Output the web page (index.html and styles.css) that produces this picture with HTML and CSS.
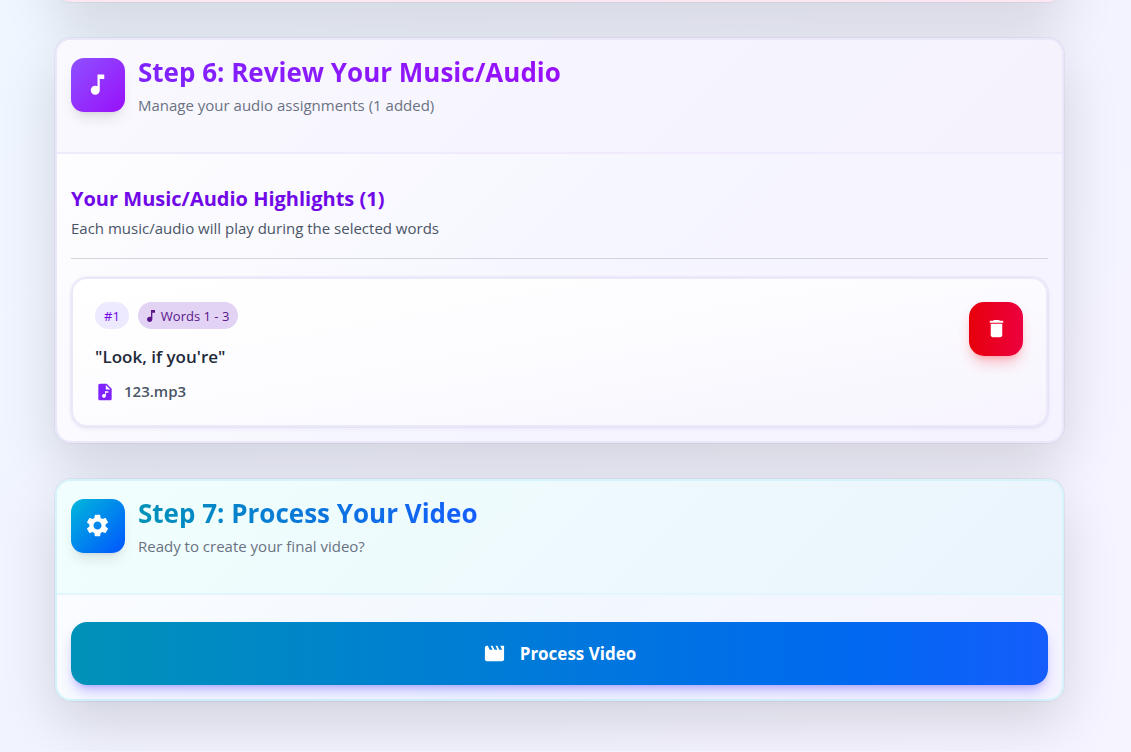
FILE: index.html
```html
<!DOCTYPE html>
<html lang="en">
<head>
<meta charset="utf-8">
<meta name="viewport" content="width=device-width, initial-scale=1">
<title>Review and process</title>
<link rel="stylesheet" href="styles.css">
</head>
<body>
<main class="page">
  <section class="card card-pink" aria-hidden="true"></section>

  <section class="card card-violet">
    <header class="card-header">
      <span class="step-icon">
        <svg class="icon-lg" viewBox="0 0 24 24" aria-hidden="true"><path d="M12 3v10.55c-.59-.34-1.27-.55-2-.55-2.21 0-4 1.790-4 4s1.790 4 4 4 4-1.790 4-4V7h4V3h-6z"/></svg>
      </span>
      <div class="heading">
        <h2 class="title">Step 6: Review Your Music/Audio</h2>
        <p class="subtitle">Manage your audio assignments (1 added)</p>
      </div>
    </header>
    <div class="card-body">
      <div class="list-head">
        <h3 class="list-title">Your Music/Audio Highlights (1)</h3>
        <p class="list-note">Each music/audio will play during the selected words</p>
      </div>
      <article class="item">
        <div class="item-info">
          <div class="tags">
            <span class="tag">#1</span>
            <span class="tag tag-words"><svg class="icon-note" viewBox="0 0 24 24" aria-hidden="true"><path d="M12 3v10.55c-.59-.34-1.27-.55-2-.55-2.21 0-4 1.790-4 4s1.790 4 4 4 4-1.790 4-4V7h4V3h-6z"/></svg>Words 1 - 3</span>
          </div>
          <p class="quote">"Look, if you're"</p>
          <p class="file"><svg class="icon-file" viewBox="0 0 24 24" aria-hidden="true"><path d="M14 2H6c-1.100 0-1.990.9-1.990 2L4 20c0 1.100.89 2 1.990 2H18c1.100 0 2-.9 2-2V8l-6-6zm2 11h-3v3.750c0 1.240-1.010 2.250-2.250 2.250S8.500 17.990 8.500 16.750s1.010-2.250 2.250-2.250c.46 0 .89.140 1.250.38V11h4v2zm-3-4V3.500L18.500 9H13z"/></svg>123.mp3</p>
        </div>
        <button class="delete" type="button" aria-label="Delete">
          <svg class="icon-trash" viewBox="0 0 24 24" aria-hidden="true"><path d="M6 19c0 1.100.9 2 2 2h8c1.100 0 2-.9 2-2V7H6v12zM19 4h-3.500l-1-1h-5l-1 1H5v2h14V4z"/></svg>
        </button>
      </article>
    </div>
  </section>

  <section class="card card-cyan">
    <header class="card-header">
      <span class="step-icon">
        <svg class="icon-lg" viewBox="0 0 24 24" aria-hidden="true"><path d="M19.140 12.940c.04-.3.060-.61.060-.94 0-.32-.02-.64-.07-.94l2.030-1.580c.18-.14.230-.41.120-.61l-1.920-3.320c-.12-.22-.37-.29-.59-.22l-2.390.96c-.5-.38-1.030-.7-1.620-.94l-.36-2.540c-.04-.24-.24-.41-.48-.41h-3.840c-.24 0-.43.170-.47.410l-.36 2.540c-.59.240-1.130.57-1.620.94l-2.390-.96c-.22-.08-.47 0-.59.220L2.740 8.870c-.12.210-.08.470.120.610l2.030 1.580c-.05.3-.09.63-.09.94s.02.640.070.940l-2.030 1.580c-.18.140-.23.410-.12.610l1.920 3.320c.12.220.37.290.59.220l2.390-.96c.5.380 1.030.7 1.620.94l.36 2.540c.05.240.24.410.48.410h3.840c.24 0 .44-.17.470-.41l.36-2.540c.59-.24 1.130-.56 1.620-.94l2.390.96c.22.080.47 0 .59-.22l1.920-3.320c.12-.22.070-.47-.12-.61l-2.010-1.580zM12 15.600c-1.980 0-3.600-1.620-3.600-3.600s1.620-3.600 3.600-3.600 3.600 1.620 3.600 3.600-1.620 3.600-3.600 3.600z"/></svg>
      </span>
      <div class="heading">
        <h2 class="title">Step 7: Process Your Video</h2>
        <p class="subtitle">Ready to create your final video?</p>
      </div>
    </header>
    <div class="card-body">
      <button class="process" type="button">
        <svg class="icon-movie" viewBox="0 0 24 24" aria-hidden="true"><path d="M18 4l2 4h-3l-2-4h-2l2 4h-3l-2-4H8l2 4H7L5 4H4c-1.100 0-1.990.9-1.990 2L2 18c0 1.100.9 2 2 2h16c1.100 0 2-.9 2-2V4h-4z"/></svg>
        Process Video
      </button>
    </div>
  </section>
</main>
</body>
</html>
```

FILE: styles.css
```css
* { box-sizing: border-box; }

body {
  margin: 0;
  background: linear-gradient(135deg, #eff6ff 0%, #f2f3ff 50%, #f6f4ff 100%);
  font-family: "Open Sans", "Noto Sans", sans-serif;
  color: #1e2939;
}

h2, h3, p { margin: 0; }
svg { fill: currentColor; flex: none; }

.page {
  display: flex;
  flex-direction: column;
  gap: 36px;
  margin-top: -58px;
  padding: 0 67px 50px 55px;
}

.card {
  border: 2px solid;
  border-radius: 16px;
  box-shadow: 0 22px 55px rgba(0, 0, 0, 0.14), 0 0 0 1px rgba(80, 70, 140, 0.06);
}

.card-pink {
  height: 60px;
  border-color: #fce7f3;
  background: #fde8f0;
}

.card-violet {
  border-color: #ebe7fb;
  background: linear-gradient(135deg, #ffffff 0%, #f6f6ff 50%, #f5f3ff 100%);
}

.card-cyan {
  border-color: #d4f3fa;
  background: linear-gradient(135deg, #fcfdff 0%, #f2f8ff 50%, #f5f3ff 100%);
}

.card-header {
  display: flex;
  gap: 13px;
  height: 114px;
  padding: 18px 14px;
  border-bottom: 2px solid;
  border-radius: 14px 14px 0 0;
}

.card-violet .card-header {
  border-color: #efebfc;
  background: linear-gradient(135deg, #faf9fe 0%, #f6f4fe 50%, #f5f2fc 100%);
}

.card-cyan .card-header {
  border-color: #e0f5fc;
  background: linear-gradient(135deg, #f0fffd 0%, #eefafd 45%, #ebf4fd 100%);
}

.step-icon {
  display: grid;
  place-items: center;
  flex: none;
  width: 54px;
  height: 54px;
  padding: 0 1px 1px 0;
  border-radius: 13px;
  color: #fff;
  box-shadow: 0 9px 13px -3px rgba(0, 0, 0, 0.1), 0 4px 5px -4px rgba(0, 0, 0, 0.1);
}

.card-violet .step-icon { background: linear-gradient(135deg, #8e51ff, #9810fa); }
.card-cyan .step-icon { background: linear-gradient(135deg, #00b8db, #0055ff); }

.icon-lg { width: 27px; height: 27px; }

.heading {
  display: flex;
  flex-direction: column;
  align-items: flex-start;
}

.title {
  font-size: 26px;
  line-height: 29px;
  font-weight: 700;
  color: transparent;
  background-clip: text;
  -webkit-background-clip: text;
}

.card-violet .title { background-image: linear-gradient(90deg, #7f22fe, #9810fa); }
.card-cyan .title { background-image: linear-gradient(90deg, #0092b8, #155dfc); }

.subtitle {
  margin-top: 6px;
  font-size: 15px;
  line-height: 24px;
  color: #6a7282;
}

.card-body { padding: 27px 14px 14px; }

.list-head {
  margin-bottom: 18px;
  padding-bottom: 18px;
  border-bottom: 1px solid #d1d5dc;
}

.list-title {
  font-size: 20px;
  line-height: 35px;
  font-weight: 700;
  color: #7008e7;
}

.list-note {
  font-size: 15px;
  line-height: 24px;
  color: #4a5565;
}

.item {
  display: flex;
  justify-content: space-between;
  align-items: flex-start;
  padding: 23px 23px 22px 22px;
  border: 2px solid #ebe8f9;
  border-radius: 16px;
  background: linear-gradient(170deg, #ffffff 0%, #fdfdff 40%, #f7f4fe 100%);
  box-shadow: 0 0 0 1px rgba(90, 80, 160, 0.06), 0 2px 4px rgba(90, 80, 160, 0.08);
}

.tags { display: flex; gap: 9px; }

.tag {
  display: flex;
  align-items: center;
  gap: 2px;
  height: 27px;
  padding: 0 9px;
  border-radius: 14px;
  background: #ede9fe;
  font-size: 13px;
  color: #7008e7;
}

.tag-words { background: #e2d2f4; color: #59168b; padding-left: 5px; }

.icon-note { width: 16px; height: 16px; }

.quote {
  margin-top: 14px;
  font-size: 17px;
  line-height: 28px;
  font-weight: 600;
}

.file {
  display: flex;
  align-items: center;
  gap: 9px;
  margin-top: 9px;
  font-size: 15px;
  line-height: 23px;
  font-weight: 600;
  color: #4a5565;
}

.icon-file { width: 20px; height: 20px; color: #7f22fe; }

button {
  border: 0;
  color: #fff;
  font-family: inherit;
  cursor: pointer;
}

.delete {
  display: grid;
  place-items: center;
  width: 54px;
  height: 54px;
  padding: 0 0 1px;
  border-radius: 15px;
  background: linear-gradient(90deg, #e7000b, #ec003f);
  box-shadow: 0 9px 14px -3px rgba(251, 44, 54, 0.3), 0 4px 6px -4px rgba(251, 44, 54, 0.3);
}

.icon-trash { width: 23px; height: 23px; }

.process {
  display: flex;
  justify-content: center;
  align-items: center;
  gap: 14px;
  width: 100%;
  height: 63px;
  border-radius: 16px;
  background: linear-gradient(90deg, #0092b8 0%, #0069f0 80%, #155dfc 100%);
  box-shadow: 0 9px 14px -3px rgba(98, 80, 255, 0.35), 0 4px 6px -4px rgba(98, 80, 255, 0.35);
  font-size: 17px;
  font-weight: 700;
}

.icon-movie { width: 23px; height: 23px; }
```
